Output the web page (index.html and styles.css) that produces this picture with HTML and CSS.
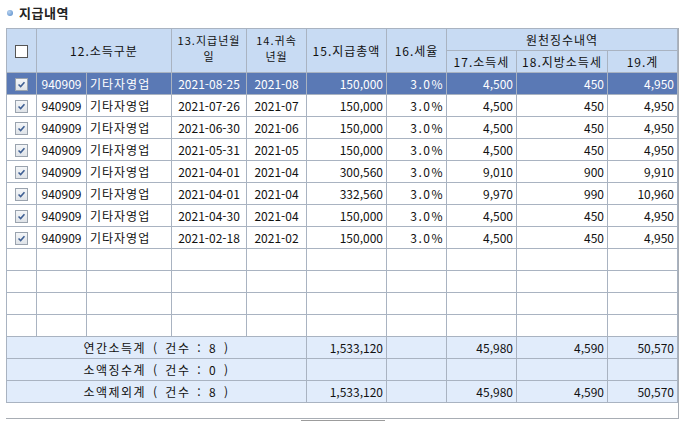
FILE: index.html
```html
<!DOCTYPE html>
<html lang="ko">
<head>
<meta charset="utf-8">
<link rel="stylesheet" href="styles.css">
</head>
<body>
<div class="title"><span class="dot"></span><span class="title-text">지급내역</span></div>
<div class="wrap">
<table class="grid">
<colgroup>
<col class="c-chk"><col class="c-code"><col class="c-name"><col class="c-date"><col class="c-ym"><col class="c-amt"><col class="c-rate"><col class="c-tax"><col class="c-local"><col class="c-sum">
</colgroup>
<thead>
<tr>
<th rowspan="2"><span class="cb"></span></th>
<th colspan="2" rowspan="2">12.소득구분</th>
<th rowspan="2" class="two">13.지급년월<br>일</th>
<th rowspan="2" class="two">14.귀속<br>년월</th>
<th rowspan="2">15.지급총액</th>
<th rowspan="2">16.세율</th>
<th colspan="3">원천징수내역</th>
</tr>
<tr>
<th>17.소득세</th>
<th>18.지방소득세</th>
<th>19.계</th>
</tr>
</thead>
<tbody>
<tr class="sel"><td class="ctr"><span class="cb on"><svg viewBox="0 0 13 13"><path d="M3 6.5 L5.5 9 L10 3.8" fill="none" stroke="#3f5f93" stroke-width="1.8"/></svg></span></td><td class="ctr">940909</td><td class="lft">기타자영업</td><td class="ctr">2021-08-25</td><td class="ctr">2021-08</td><td class="num">150,000</td><td class="num rate">3.0%</td><td class="num">4,500</td><td class="num">450</td><td class="num">4,950</td></tr>
<tr><td class="ctr"><span class="cb on"><svg viewBox="0 0 13 13"><path d="M3 6.5 L5.5 9 L10 3.8" fill="none" stroke="#3f5f93" stroke-width="1.8"/></svg></span></td><td class="ctr">940909</td><td class="lft">기타자영업</td><td class="ctr">2021-07-26</td><td class="ctr">2021-07</td><td class="num">150,000</td><td class="num rate">3.0%</td><td class="num">4,500</td><td class="num">450</td><td class="num">4,950</td></tr>
<tr><td class="ctr"><span class="cb on"><svg viewBox="0 0 13 13"><path d="M3 6.5 L5.5 9 L10 3.8" fill="none" stroke="#3f5f93" stroke-width="1.8"/></svg></span></td><td class="ctr">940909</td><td class="lft">기타자영업</td><td class="ctr">2021-06-30</td><td class="ctr">2021-06</td><td class="num">150,000</td><td class="num rate">3.0%</td><td class="num">4,500</td><td class="num">450</td><td class="num">4,950</td></tr>
<tr><td class="ctr"><span class="cb on"><svg viewBox="0 0 13 13"><path d="M3 6.5 L5.5 9 L10 3.8" fill="none" stroke="#3f5f93" stroke-width="1.8"/></svg></span></td><td class="ctr">940909</td><td class="lft">기타자영업</td><td class="ctr">2021-05-31</td><td class="ctr">2021-05</td><td class="num">150,000</td><td class="num rate">3.0%</td><td class="num">4,500</td><td class="num">450</td><td class="num">4,950</td></tr>
<tr><td class="ctr"><span class="cb on"><svg viewBox="0 0 13 13"><path d="M3 6.5 L5.5 9 L10 3.8" fill="none" stroke="#3f5f93" stroke-width="1.8"/></svg></span></td><td class="ctr">940909</td><td class="lft">기타자영업</td><td class="ctr">2021-04-01</td><td class="ctr">2021-04</td><td class="num">300,560</td><td class="num rate">3.0%</td><td class="num">9,010</td><td class="num">900</td><td class="num">9,910</td></tr>
<tr><td class="ctr"><span class="cb on"><svg viewBox="0 0 13 13"><path d="M3 6.5 L5.5 9 L10 3.8" fill="none" stroke="#3f5f93" stroke-width="1.8"/></svg></span></td><td class="ctr">940909</td><td class="lft">기타자영업</td><td class="ctr">2021-04-01</td><td class="ctr">2021-04</td><td class="num">332,560</td><td class="num rate">3.0%</td><td class="num">9,970</td><td class="num">990</td><td class="num">10,960</td></tr>
<tr><td class="ctr"><span class="cb on"><svg viewBox="0 0 13 13"><path d="M3 6.5 L5.5 9 L10 3.8" fill="none" stroke="#3f5f93" stroke-width="1.8"/></svg></span></td><td class="ctr">940909</td><td class="lft">기타자영업</td><td class="ctr">2021-04-30</td><td class="ctr">2021-04</td><td class="num">150,000</td><td class="num rate">3.0%</td><td class="num">4,500</td><td class="num">450</td><td class="num">4,950</td></tr>
<tr><td class="ctr"><span class="cb on"><svg viewBox="0 0 13 13"><path d="M3 6.5 L5.5 9 L10 3.8" fill="none" stroke="#3f5f93" stroke-width="1.8"/></svg></span></td><td class="ctr">940909</td><td class="lft">기타자영업</td><td class="ctr">2021-02-18</td><td class="ctr">2021-02</td><td class="num">150,000</td><td class="num rate">3.0%</td><td class="num">4,500</td><td class="num">450</td><td class="num">4,950</td></tr>
<tr><td></td><td></td><td></td><td></td><td></td><td></td><td></td><td></td><td></td><td></td></tr>
<tr><td></td><td></td><td></td><td></td><td></td><td></td><td></td><td></td><td></td><td></td></tr>
<tr><td></td><td></td><td></td><td></td><td></td><td></td><td></td><td></td><td></td><td></td></tr>
<tr><td></td><td></td><td></td><td></td><td></td><td></td><td></td><td></td><td></td><td></td></tr>
<tr class="tot"><td colspan="5" class="ctr lbl">연간소득계 ( 건수 : 8 )</td><td class="num">1,533,120</td><td></td><td class="num">45,980</td><td class="num">4,590</td><td class="num">50,570</td></tr>
<tr class="tot"><td colspan="5" class="ctr lbl">소액징수계 ( 건수 : 0 )</td><td></td><td></td><td></td><td></td><td></td></tr>
<tr class="tot"><td colspan="5" class="ctr lbl">소액제외계 ( 건수 : 8 )</td><td class="num">1,533,120</td><td></td><td class="num">45,980</td><td class="num">4,590</td><td class="num">50,570</td></tr>
</tbody>
</table>
</div>
<div class="peek"></div>
</body>
</html>
```
FILE: styles.css
```css
html, body {
  margin: 0;
  padding: 0;
  background: #ffffff;
}
body {
  font-family: "Noto Sans CJK KR", "Noto Sans", sans-serif;
  font-size: 12px;
  color: #111;
  overflow: hidden;
}
.title {
  height: 28px;
  display: flex;
  align-items: center;
  padding-left: 7px;
  box-sizing: border-box;
  padding-bottom: 3px;
}
.dot {
  width: 6px;
  height: 6px;
  border-radius: 50%;
  background: radial-gradient(circle at 35% 35%, #b9d3f0, #4f86c6);
  margin-right: 6px;
}
.title-text {
  font-weight: bold;
  font-size: 13px;
  color: #222;
  letter-spacing: 0.5px;
}
.wrap {
  margin-left: 6px;
  width: 672px;
  height: 390px;
  border: 1px solid #a8adb4;
  border-top: none;
  border-left: none;
}
.grid {
  border-collapse: collapse;
  table-layout: fixed;
  width: 672px;
}
.c-chk { width: 30px; }
.c-code { width: 50px; }
.c-name { width: 85px; }
.c-date { width: 75px; }
.c-ym { width: 60px; }
.c-amt { width: 80px; }
.c-rate { width: 60px; }
.c-tax { width: 70px; }
.c-local { width: 91px; }
.c-sum { width: 70px; }
.grid th, .grid td {
  border: 1px solid #a9b3c1;
  height: 21px;
  padding: 0;
  white-space: nowrap;
  overflow: hidden;
  line-height: 14px;
}
.grid th {
  background: #c8dbf3;
  font-weight: normal;
  color: #111;
  text-align: center;
  letter-spacing: 1px;
}
.grid th.two {
  font-size: 11px;
  line-height: 16px;
  vertical-align: top;
  padding-top: 3px;
}
.grid td.ctr { text-align: center; }
.grid td.lft { text-align: left; padding-left: 3px; letter-spacing: 1px; }
.grid td.num { text-align: right; padding-right: 3px; }
.grid td.rate { letter-spacing: 1.5px; padding-right: 2px; }
.grid td.lbl { letter-spacing: 1.5px; word-spacing: 2px; }
.sel td {
  background: #5a79b5;
  color: #ffffff;
}
.tot td {
  background: #e1ecfb;
}
.cb {
  display: inline-block;
  width: 11px;
  height: 11px;
  border: 1px solid #555;
  background: #fff;
  vertical-align: middle;
}
.cb.on {
  border-color: #9aa3ae;
  background: linear-gradient(#f4f6f8, #dfe3e8);
}
.cb svg {
  display: block;
  width: 11px;
  height: 11px;
}
.peek {
  margin-left: 301px;
  margin-top: 1px;
  width: 84px;
  height: 3px;
  border-top: 1px solid #9c9c9c;
}
```
